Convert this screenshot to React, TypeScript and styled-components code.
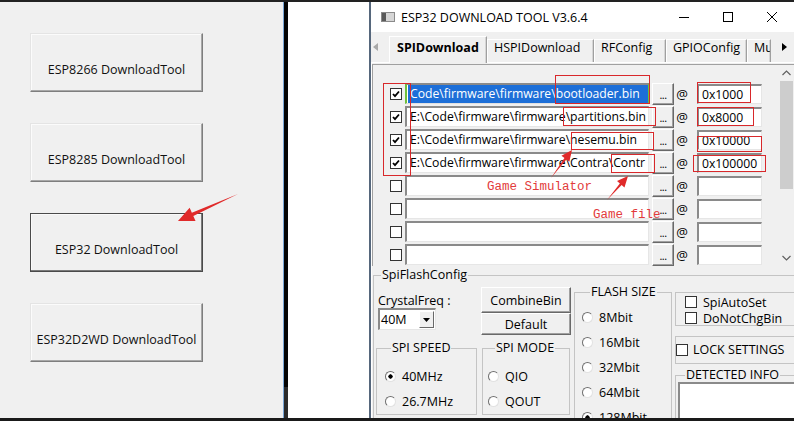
import React from "react";
import styled, { createGlobalStyle } from "styled-components";

const UI = `"Open Sans", "Noto Sans", "Liberation Sans", sans-serif`;
const MONO = `"Liberation Mono", "DejaVu Sans Mono", monospace`;

const Global = createGlobalStyle`
  html, body { margin: 0; padding: 0; background: #1b1b1b; }
  * { box-sizing: border-box; }
`;

const Screen = styled.div`
  position: relative;
  width: 794px;
  height: 421px;
  overflow: hidden;
  background: #1c1c1c;
  display: flex;
  flex-direction: column;
  font-family: ${UI};
  color: #000;
`;
const TopEdge = styled.div`
  height: 2px;
  flex: none;
  background: #222;
`;
const BottomEdge = styled.div`
  height: 3px;
  flex: none;
  background: #1a1a1a;
`;
const Desk = styled.div`
  flex: 1;
  min-height: 0;
  display: flex;
`;

/* ---------- left launcher ---------- */
const LeftPanel = styled.div`
  width: 283px;
  flex: none;
  background: #f0f0f0;
  display: flex;
  flex-direction: column;
  gap: 31px;
  padding: 31px 0 0 30px;
`;
const ToolButton = styled.button<{ $focused?: boolean }>`
  width: 173px;
  height: 59px;
  flex: none;
  padding: 14px 0 0;
  font-family: ${UI};
  font-size: 12.5px;
  color: #111;
  background: #f0f0f0;
  border: 1px solid;
  border-color: ${(p) => (p.$focused ? "#4a4a4a" : "#e4e4e4 #7e7e7e #7e7e7e #e4e4e4")};
  box-shadow: ${(p) =>
    p.$focused
      ? "inset -1px -1px 0 #7a7a7a, inset 1px 1px 0 #fafafa"
      : "inset -1px -1px 0 #a8a8a8, inset 1px 1px 0 #fbfbfb"};
  white-space: nowrap;
`;
const Splitter = styled.div`
  width: 5px;
  flex: none;
  border-left: 1px solid #7aa6d6;
  background: linear-gradient(#040404 0 385px, #2b2b2b 385px);
`;
const WhiteGap = styled.div`
  width: 81px;
  flex: none;
  background: #fff;
`;

/* ---------- window ---------- */
const Window = styled.div`
  flex: 1;
  min-width: 0;
  display: flex;
  flex-direction: column;
  background: #f0f0f0;
  border-left: 2px solid #56677c;
  overflow: hidden;
`;
const TitleBar = styled.div`
  height: 30px;
  flex: none;
  background: #fff;
  display: flex;
  align-items: center;
  padding-left: 10px;
`;
const Title = styled.span`
  margin-left: 6px;
  font-size: 12.5px;
  white-space: nowrap;
`;
const Controls = styled.div`
  margin-left: auto;
  display: flex;
  height: 100%;
`;
const ControlBtn = styled.div`
  width: 44px;
  height: 100%;
  display: flex;
  align-items: center;
  justify-content: center;
`;

const TabStrip = styled.div`
  height: 30px;
  flex: none;
  display: flex;
  align-items: flex-end;
`;
const StripArrow = styled.div<{ $w: number; $dark?: boolean; $end?: boolean }>`
  width: ${(p) => p.$w}px;
  flex: none;
  height: 100%;
  display: flex;
  align-items: center;
  justify-content: ${(p) => (p.$end ? "flex-end" : "flex-start")};
  padding: ${(p) => (p.$end ? "0 6px 0 0" : "0 0 0 2px")};
  color: ${(p) => (p.$dark ? "#000" : "#a8a8a8")};
  background: #f0f0f0;
  position: relative;
  z-index: 2;
`;
const Tab = styled.div<{ $w: number; $active?: boolean }>`
  width: ${(p) => p.$w}px;
  flex: none;
  height: ${(p) => (p.$active ? 27 : 23)}px;
  margin-bottom: ${(p) => (p.$active ? -1 : 0)}px;
  position: relative;
  z-index: ${(p) => (p.$active ? 1 : 0)};
  padding: ${(p) => (p.$active ? "3px 0 0 7px" : "0 0 0 6px")};
  font-size: 12.5px;
  line-height: 15px;
  font-weight: ${(p) => (p.$active ? 700 : 400)};
  white-space: nowrap;
  overflow: hidden;
  background: #f0f0f0;
  border-top: 1px solid #fff;
  border-left: 1px solid #fff;
  border-right: 1px solid #a0a0a0;
  box-shadow: inset -1px 0 0 #d6d6d6;
`;

const TabPanel = styled.div`
  flex: 1;
  min-height: 0;
  display: flex;
  flex-direction: column;
  border-top: 1px solid #fff;
  border-left: 1px solid #fff;
`;

const FileList = styled.div`
  height: 202px;
  flex: none;
  margin-top: 1px;
  display: flex;
  border-top: 1px solid #a0a0a0;
  border-left: 1px solid #a0a0a0;
`;
const ListBody = styled.div`
  flex: 1;
  overflow: hidden;
  display: flex;
  flex-direction: column;
  gap: 2px;
  padding: 18px 0 0 17px;
`;
const Row = styled.div`
  height: 21px;
  flex: none;
  display: flex;
  align-items: center;
`;
const CheckBox = styled.span`
  width: 12px;
  height: 12px;
  flex: none;
  display: inline-flex;
  align-items: center;
  justify-content: center;
  background: #fff;
  border: 1px solid #333;
`;
const Field = styled.div<{ $w: number; $h?: number; $focus?: boolean; $ml?: number }>`
  width: ${(p) => p.$w}px;
  height: ${(p) => p.$h ?? 21}px;
  flex: none;
  margin-left: ${(p) => p.$ml ?? 0}px;
  background: #fff;
  border-style: solid;
  border-width: 2px 1px 1px 2px;
  border-color: ${(p) => (p.$focus ? "#8a8a8a #6fc03c #e0e0e0 #6fc03c" : "#8a8a8a #e6e6e6 #e6e6e6 #8a8a8a")};
  font-size: 12.2px;
  line-height: 17px;
  padding-left: 3px;
  white-space: nowrap;
  overflow: hidden;
`;
const Selected = styled.span`
  display: block;
  background: #1d6fd8;
  color: #fff;
  height: 18px;
  margin-left: -2px;
  padding-left: 2px;
`;
const Browse = styled.div`
  width: 22px;
  height: 22px;
  flex: none;
  margin-left: 3px;
  background: #f0f0f0;
  border: 1px solid;
  border-color: #fff #696969 #696969 #fff;
  box-shadow: inset -1px -1px 0 #a0a0a0;
  font-size: 11px;
  line-height: 14px;
  text-align: center;
  padding-top: 4px;
  letter-spacing: -0.5px;
`;
const At = styled.span`
  width: 12px;
  flex: none;
  margin-left: 2px;
  font-size: 13px;
  text-align: center;
`;

const ScrollBar = styled.div`
  width: 16px;
  flex: none;
  display: flex;
  flex-direction: column;
  align-items: center;
  background: #f0f0f0;
`;
const ScrollArrow = styled.div`
  height: 16px;
  flex: none;
  display: flex;
  align-items: center;
  justify-content: center;
`;
const Thumb = styled.div`
  width: 13px;
  height: 108px;
  flex: none;
  background: #cdcdcd;
`;
const Spacer = styled.div`
  flex: 1;
`;

/* ---------- spi flash config ---------- */
const Group = styled.fieldset<{ $w?: number; $mt?: number; $ml?: number; $pt?: number; $pl?: number }>`
  margin: ${(p) => p.$mt ?? 0}px 0 0 ${(p) => p.$ml ?? 0}px;
  padding: ${(p) => p.$pt ?? 0}px 0 0 ${(p) => p.$pl ?? 0}px;
  min-width: 0;
  width: ${(p) => (p.$w ? `${p.$w}px` : "auto")};
  flex: none;
  border: 1px solid #c4c4c4;
  display: flex;
  flex-direction: column;
`;
const Legend = styled.legend<{ $ml?: number }>`
  margin-left: ${(p) => p.$ml ?? 5}px;
  padding: 0 1px;
  font-size: 12.5px;
  line-height: 14px;
  white-space: nowrap;
`;
const FlashConfig = styled.fieldset`
  flex: 1;
  min-height: 0;
  margin: 2px 0 0 1px;
  padding: 0 0 0 2px;
  min-width: 0;
  border: 1px solid #c4c4c4;
  border-right: none;
  border-bottom: none;
  display: flex;
  align-items: flex-start;
`;
const ColAB = styled.div`
  width: 196px;
  flex: none;
  margin-top: 5px;
  display: flex;
  flex-direction: column;
`;
const TopRow = styled.div`
  height: 54px;
  display: flex;
`;
const CrystalCol = styled.div`
  margin-left: 2px;
  width: 60px;
  padding-top: 6px;
`;
const Label = styled.div`
  font-size: 12.5px;
  line-height: 15px;
  white-space: nowrap;
`;
const Combo = styled.div`
  width: 58px;
  height: 22px;
  display: flex;
  align-items: center;
  background: #fff;
  border-style: solid;
  border-width: 2px 1px 1px 2px;
  border-color: #8a8a8a #e6e6e6 #e6e6e6 #8a8a8a;
  font-size: 12.5px;
  padding-left: 1px;
`;
const ComboBtn = styled.div`
  margin-left: auto;
  margin-right: 1px;
  width: 15px;
  height: 17px;
  background: #f0f0f0;
  border: 1px solid;
  border-color: #fff #696969 #696969 #fff;
  display: flex;
  align-items: center;
  justify-content: center;
`;
const ButtonCol = styled.div`
  margin-left: 43px;
  display: flex;
  flex-direction: column;
`;
const PushButton = styled.div<{ $h: number }>`
  width: 90px;
  height: ${(p) => p.$h}px;
  background: #f0f0f0;
  border: 1px solid;
  border-color: #fff #696969 #696969 #fff;
  box-shadow: inset -1px -1px 0 #a0a0a0;
  font-size: 12.5px;
  display: flex;
  align-items: center;
  justify-content: center;
`;
const BottomRow = styled.div`
  display: flex;
  gap: 5px;
`;
const RadioRow = styled.div<{ $gap?: number }>`
  height: 25px;
  flex: none;
  display: flex;
  align-items: center;
  gap: ${(p) => p.$gap ?? 6}px;
  font-size: 12.5px;
  white-space: nowrap;
`;
const Radio = styled.span<{ $on?: boolean }>`
  width: 11px;
  height: 11px;
  flex: none;
  border-radius: 50%;
  border: 1px solid;
  border-color: #6f6f6f #e2e2e2 #e2e2e2 #6f6f6f;
  background: ${(p) =>
    p.$on ? "radial-gradient(circle, #000 0 1.9px, #fff 2.4px)" : "#fff"};
`;
const ColD = styled.div`
  margin: 10px 0 0 3px;
  width: 140px;
  flex: none;
  display: flex;
  flex-direction: column;
`;
const Box = styled.div<{ $h: number; $mt?: number; $pt?: number }>`
  height: ${(p) => p.$h}px;
  margin-top: ${(p) => p.$mt ?? 0}px;
  padding-top: ${(p) => p.$pt ?? 0}px;
  border: 1px solid #c4c4c4;
  display: flex;
  flex-direction: column;
`;
const CheckLine = styled.div<{ $pl?: number; $h?: number; $gap?: number }>`
  height: ${(p) => p.$h ?? 16}px;
  display: flex;
  align-items: center;
  gap: ${(p) => p.$gap ?? 6}px;
  padding-left: ${(p) => p.$pl ?? 0}px;
  font-size: 12.5px;
  white-space: nowrap;
`;
const InfoArea = styled.div`
  margin: 0 0 0 2px;
  height: 60px;
  background: #fff;
  border-style: solid;
  border-width: 2px 0 0 2px;
  border-color: #8a8a8a;
  display: flex;
  justify-content: flex-end;
`;
const InfoScroll = styled.div`
  width: 17px;
  background: #f0f0f0;
  display: flex;
  justify-content: center;
  padding-top: 5px;
`;

/* ---------- annotations ---------- */
const Overlay = styled.svg`
  position: absolute;
  left: 0;
  top: 0;
  pointer-events: none;
`;
const Note = styled.span<{ $x: number; $y: number }>`
  position: absolute;
  left: ${(p) => p.$x}px;
  top: ${(p) => p.$y}px;
  font-family: ${MONO};
  font-size: 12.5px;
  line-height: 14px;
  color: #e23b3b;
  white-space: nowrap;
`;

const Check = () => (
  <svg width="8" height="8" viewBox="0 0 8 8">
    <path d="M1 4 L3 6.2 L7 1.5" fill="none" stroke="#000" strokeWidth="1.8" />
  </svg>
);

const rows = [
  { on: true, path: "Code\\firmware\\firmware\\bootloader.bin", addr: "0x1000", focus: true },
  { on: true, path: "E:\\Code\\firmware\\firmware\\partitions.bin", addr: "0x8000" },
  { on: true, path: "E:\\Code\\firmware\\firmware\\nesemu.bin", addr: "0x10000" },
  { on: true, path: "E:\\Code\\firmware\\firmware\\Contra\\Contr", addr: "0x100000" },
  { on: false, path: "", addr: "" },
  { on: false, path: "", addr: "" },
  { on: false, path: "", addr: "" },
  { on: false, path: "", addr: "" },
];

const arrow = (x1: number, y1: number, x2: number, y2: number, head: number, w: number) => {
  const dx = x2 - x1;
  const dy = y2 - y1;
  const len = Math.hypot(dx, dy);
  const ux = dx / len;
  const uy = dy / len;
  const nx = -uy;
  const ny = ux;
  const bx = x2 - ux * head;
  const by = y2 - uy * head;
  const pts = [
    [x1, y1],
    [bx + nx * w * 0.6, by + ny * w * 0.6],
    [bx + nx * head * 0.45, by + ny * head * 0.45],
    [x2, y2],
    [bx - nx * head * 0.45, by - ny * head * 0.45],
    [bx - nx * w * 0.6, by - ny * w * 0.6],
  ];
  return pts.map((p) => p.join(",")).join(" ");
};

export default function App() {
  return (
    <Screen>
      <Global />
      <TopEdge />
      <Desk>
        <LeftPanel>
          <ToolButton>ESP8266 DownloadTool</ToolButton>
          <ToolButton>ESP8285 DownloadTool</ToolButton>
          <ToolButton $focused>ESP32 DownloadTool</ToolButton>
          <ToolButton>ESP32D2WD DownloadTool</ToolButton>
        </LeftPanel>
        <Splitter />
        <WhiteGap />
        <Window>
          <TitleBar>
            <svg width="14" height="10" viewBox="0 0 14 10">
              <rect x="0.5" y="0.5" width="13" height="9" fill="#d6d6d6" stroke="#8a8a8a" />
              <rect x="1" y="1" width="4" height="8" fill="#5a5a5a" />
            </svg>
            <Title>ESP32 DOWNLOAD TOOL V3.6.4</Title>
            <Controls>
              <ControlBtn>
                <svg width="10" height="10" viewBox="0 0 10 10">
                  <path d="M0 5.5 H10" stroke="#000" strokeWidth="1" />
                </svg>
              </ControlBtn>
              <ControlBtn>
                <svg width="10" height="10" viewBox="0 0 10 10">
                  <rect x="0.5" y="0.5" width="9" height="9" fill="none" stroke="#000" />
                </svg>
              </ControlBtn>
              <ControlBtn>
                <svg width="10" height="10" viewBox="0 0 10 10">
                  <path d="M0 0 L10 10 M10 0 L0 10" stroke="#000" strokeWidth="1" />
                </svg>
              </ControlBtn>
            </Controls>
          </TitleBar>
          <TabStrip>
            <StripArrow $w={18}>
              <svg width="5" height="8" viewBox="0 0 5 8">
                <path d="M5 0 L0 4 L5 8 Z" fill="currentColor" />
              </svg>
            </StripArrow>
            <Tab $w={98} $active>SPIDownload</Tab>
            <Tab $w={107}>HSPIDownload</Tab>
            <Tab $w={72}>RFConfig</Tab>
            <Tab $w={81}>GPIOConfig</Tab>
            <Tab $w={24}>Mu</Tab>
            <StripArrow $w={22} $dark $end>
              <svg width="5" height="8" viewBox="0 0 5 8">
                <path d="M0 0 L5 4 L0 8 Z" fill="currentColor" />
              </svg>
            </StripArrow>
          </TabStrip>
          <TabPanel>
            <FileList>
              <ListBody>
                {rows.map((r, i) => (
                  <Row key={i}>
                    <CheckBox>{r.on && <Check />}</CheckBox>
                    <Field $w={244} $ml={3} $focus={r.focus}>
                      {r.focus ? <Selected>{r.path}</Selected> : r.path}
                    </Field>
                    <Browse>...</Browse>
                    <At>@</At>
                    <Field $w={65} $h={20} $ml={9}>
                      {r.addr}
                    </Field>
                  </Row>
                ))}
              </ListBody>
              <ScrollBar>
                <ScrollArrow>
                  <svg width="9" height="6" viewBox="0 0 9 6">
                    <path d="M0.5 5 L4.5 1 L8.5 5" fill="none" stroke="#606060" strokeWidth="1.2" />
                  </svg>
                </ScrollArrow>
                <Thumb />
                <Spacer />
                <ScrollArrow>
                  <svg width="9" height="6" viewBox="0 0 9 6">
                    <path d="M0.5 1 L4.5 5 L8.5 1" fill="none" stroke="#606060" strokeWidth="1.2" />
                  </svg>
                </ScrollArrow>
              </ScrollBar>
            </FileList>
            <FlashConfig>
              <Legend $ml={5}>SpiFlashConfig</Legend>
              <ColAB>
                <TopRow>
                  <CrystalCol>
                    <Label>CrystalFreq :</Label>
                    <Combo>
                      40M
                      <ComboBtn>
                        <svg width="7" height="4" viewBox="0 0 7 4">
                          <path d="M0 0 H7 L3.5 4 Z" fill="#000" />
                        </svg>
                      </ComboBtn>
                    </Combo>
                  </CrystalCol>
                  <ButtonCol>
                    <PushButton $h={26}>CombineBin</PushButton>
                    <PushButton $h={22}>Default</PushButton>
                  </ButtonCol>
                </TopRow>
                <BottomRow>
                  <Group $w={101} $pt={9} $pl={8}>
                    <Legend $ml={6}>SPI SPEED</Legend>
                    <RadioRow>
                      <Radio $on />
                      40MHz
                    </RadioRow>
                    <RadioRow>
                      <Radio />
                      26.7MHz
                    </RadioRow>
                  </Group>
                  <Group $w={88} $pt={9} $pl={5}>
                    <Legend $ml={7}>SPI MODE</Legend>
                    <RadioRow>
                      <Radio />
                      QIO
                    </RadioRow>
                    <RadioRow>
                      <Radio />
                      QOUT
                    </RadioRow>
                  </Group>
                </BottomRow>
              </ColAB>
              <Group $w={98} $mt={3} $ml={2} $pt={6} $pl={7}>
                <Legend $ml={8}>FLASH SIZE</Legend>
                <RadioRow>
                  <Radio />
                  8Mbit
                </RadioRow>
                <RadioRow>
                  <Radio />
                  16Mbit
                </RadioRow>
                <RadioRow>
                  <Radio />
                  32Mbit
                </RadioRow>
                <RadioRow>
                  <Radio />
                  64Mbit
                </RadioRow>
                <RadioRow>
                  <Radio $on />
                  128Mbit
                </RadioRow>
              </Group>
              <ColD>
                <Box $h={34} $pt={1}>
                  <CheckLine $pl={9}>
                    <CheckBox />
                    SpiAutoSet
                  </CheckLine>
                  <CheckLine $pl={9}>
                    <CheckBox />
                    DoNotChgBin
                  </CheckLine>
                </Box>
                <Box $h={28} $mt={10}>
                  <CheckLine $h={25} $gap={5}>
                    <CheckBox />
                    LOCK SETTINGS
                  </CheckLine>
                </Box>
                <Group $mt={4}>
                  <Legend $ml={9}>DETECTED INFO</Legend>
                  <InfoArea>
                    <InfoScroll>
                      <svg width="9" height="6" viewBox="0 0 9 6">
                        <path d="M0.5 5 L4.5 1 L8.5 5" fill="none" stroke="#a0a0a0" strokeWidth="1.2" />
                      </svg>
                    </InfoScroll>
                  </InfoArea>
                </Group>
              </ColD>
            </FlashConfig>
          </TabPanel>
        </Window>
      </Desk>
      <BottomEdge />

      <Overlay width="794" height="421" viewBox="0 0 794 421">
        <g fill="none" stroke="#d8282b" strokeWidth="1">
          <rect x="383.5" y="83.5" width="27" height="92" />
          <rect x="555.5" y="75.5" width="94" height="28" />
          <rect x="563.5" y="107.5" width="92" height="18" />
          <rect x="571.5" y="132.5" width="82" height="17" />
          <rect x="611.5" y="154.5" width="43" height="18" />
          <rect x="697.5" y="82.5" width="53" height="20" />
          <rect x="697.5" y="107.5" width="56" height="18" />
          <rect x="697.5" y="136.5" width="64" height="15" />
          <rect x="693.5" y="155.5" width="72" height="16" />
        </g>
        <g fill="#e02a2a">
          <polygon points={arrow(238, 194, 178, 221, 16, 3)} />
          <polygon points={arrow(551, 178, 572, 150, 11, 2)} />
          <polygon points={arrow(607, 200, 628, 176, 11, 2)} />
        </g>
      </Overlay>
      <Note $x={487} $y={180}>Game Simulator</Note>
      <Note $x={593} $y={208}>Game file</Note>
    </Screen>
  );
}
